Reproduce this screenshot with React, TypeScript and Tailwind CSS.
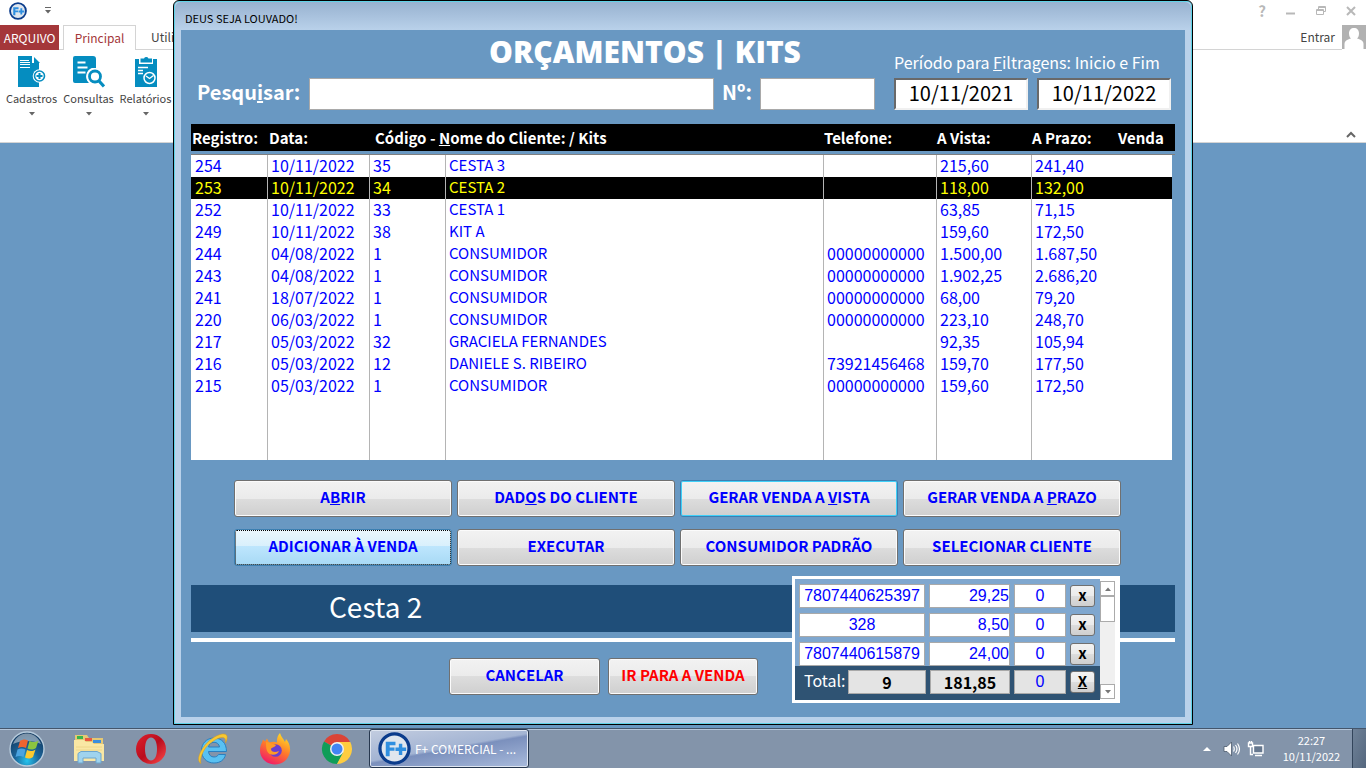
import * as React from "react"
import { clsx } from "clsx"

interface Budget {
  id: string
  date: string
  code: string
  name: string
  phone?: string
  cash: string
  credit: string
}

const budgets: Budget[] = [
  { id: "254", date: "10/11/2022", code: "35", name: "CESTA 3", cash: "215,60", credit: "241,40" },
  { id: "253", date: "10/11/2022", code: "34", name: "CESTA 2", cash: "118,00", credit: "132,00" },
  { id: "252", date: "10/11/2022", code: "33", name: "CESTA 1", cash: "63,85", credit: "71,15" },
  { id: "249", date: "10/11/2022", code: "38", name: "KIT A", cash: "159,60", credit: "172,50" },
  { id: "244", date: "04/08/2022", code: "1", name: "CONSUMIDOR", phone: "00000000000", cash: "1.500,00", credit: "1.687,50" },
  { id: "243", date: "04/08/2022", code: "1", name: "CONSUMIDOR", phone: "00000000000", cash: "1.902,25", credit: "2.686,20" },
  { id: "241", date: "18/07/2022", code: "1", name: "CONSUMIDOR", phone: "00000000000", cash: "68,00", credit: "79,20" },
  { id: "220", date: "06/03/2022", code: "1", name: "CONSUMIDOR", phone: "00000000000", cash: "223,10", credit: "248,70" },
  { id: "217", date: "05/03/2022", code: "32", name: "GRACIELA FERNANDES", cash: "92,35", credit: "105,94" },
  { id: "216", date: "05/03/2022", code: "12", name: "DANIELE S. RIBEIRO", phone: "73921456468", cash: "159,70", credit: "177,50" },
  { id: "215", date: "05/03/2022", code: "1", name: "CONSUMIDOR", phone: "00000000000", cash: "159,60", credit: "172,50" },
]

const items = [
  { code: "7807440625397", price: "29,25", qty: "0" },
  { code: "328", price: "8,50", qty: "0" },
  { code: "7807440615879", price: "24,00", qty: "0" },
]

const selectedId = "253"

function AppLogo({ className }: { className?: string }) {
  return (
    <svg viewBox="0 0 34 34" className={className} aria-hidden="true">
      <circle cx="17" cy="17" r="15" fill="#dfe6ee" stroke="#0b3c8c" strokeWidth="3.4" />
      <path d="M8 10h10v3.6h-6v2.4h5v3.4h-5V25H8z" fill="#2f8fe0" />
      <path d="M21.500 12h3.500v4h4v3.600h-4v4h-3.500v-4h-3.500V16h3.500z" fill="#2f8fe0" />
    </svg>
  )
}

function RegisterIcon() {
  return (
    <svg viewBox="2 0 32 32" className="size-8" aria-hidden="true">
      <path d="M4 0h14v7h7v24H4z" fill="#058dc0" />
      <path d="M20 1l6 6h-6z" fill="#058dc0" />
      <path d="M6 4.500h9M6 6.500h10M6 8.500h10M6 11.500h10" stroke="#fff" strokeWidth="1" />
      <circle cx="25.500" cy="20" r="6.800" fill="#fff" />
      <circle cx="25.500" cy="20" r="5" fill="#fff" stroke="#058dc0" strokeWidth="1.600" />
      <path d="M25.500 17v6M22.500 20h6" stroke="#058dc0" strokeWidth="2" />
    </svg>
  )
}

function SearchIcon() {
  return (
    <svg viewBox="0 0 32 32" className="size-8" aria-hidden="true">
      <path d="M2 0h18a3 3 0 0 1 3 3v9h-4a9 9 0 0 0-3 15H2a2 2 0 0 1-2-2V2a2 2 0 0 1 2-2z" fill="#058dc0" />
      <path d="M4.500 6.500h8M4.500 11.500h10M4.500 16.500h8" stroke="#fff" strokeWidth="2" />
      <circle cx="22" cy="20.500" r="8.500" fill="#fff" />
      <circle cx="22" cy="20.500" r="5.500" fill="#fff" stroke="#058dc0" strokeWidth="2.800" />
      <path d="M26 25l5 5.500" stroke="#058dc0" strokeWidth="3.200" />
    </svg>
  )
}

function ReportIcon() {
  return (
    <svg viewBox="0 0 32 32" className="size-8" aria-hidden="true">
      <path d="M5 3h4v5h14V3h4v28H5z" fill="#058dc0" />
      <path d="M10.500 2.500h3.500a2.500 2.500 0 0 1 4.500 0H22V6.500H10.500z" fill="#058dc0" />
      <path d="M8 11.500h10M8 14.500h5M8 17.500h5" stroke="#fff" strokeWidth="1.400" />
      <circle cx="19.500" cy="22" r="5.500" fill="none" stroke="#fff" strokeWidth="1.500" />
      <path d="M16 20l3.500 2.500 4-3" fill="none" stroke="#fff" strokeWidth="1.400" />
    </svg>
  )
}

function Caret({ className }: { className?: string }) {
  return (
    <svg viewBox="0 0 6 4" className={clsx("h-1 w-1.5", className)} aria-hidden="true">
      <path d="M0 0h6L3 3.500z" fill="currentColor" />
    </svg>
  )
}

const groups = [
  { label: "Cadastros", icon: <RegisterIcon /> },
  { label: "Consultas", icon: <SearchIcon /> },
  { label: "Relatórios", icon: <ReportIcon /> },
]

function Ribbon() {
  return (
    <header className="bg-white font-['Noto_Sans_CJK_SC',sans-serif] text-[12px] text-[#444]">
      <div className="flex h-[25px] items-center pb-1 pl-[9px]">
        <AppLogo className="size-[18px]" />
        <button aria-label="Personalizar" className="ml-[18px] flex flex-col items-center gap-0.5 text-[#666]">
          <span className="h-px w-1.5 bg-[#666]" />
          <Caret />
        </button>
        <div className="ml-auto flex items-center gap-5 pr-2.5 text-[#b8b8b8]">
          <button className="text-[15px] leading-4 font-bold">?</button>
          <button aria-label="Minimizar">
            <svg viewBox="0 0 10 10" className="size-2.5"><path d="M0 7.500h9" stroke="currentColor" strokeWidth="2" /></svg>
          </button>
          <button aria-label="Restaurar">
            <svg viewBox="0 0 10 10" className="size-2.5" fill="none" stroke="currentColor">
              <path d="M.5 3.500h7v5h-7zM.5 4.500h7M2.500 3V.500h7v5H8M2.500 1.500h7" />
            </svg>
          </button>
          <button aria-label="Fechar">
            <svg viewBox="0 0 10 10" className="size-2.5"><path d="M1 1l8 8M9 1l-8 8" stroke="currentColor" strokeWidth="2" /></svg>
          </button>
        </div>
      </div>
      <nav className="flex h-[25px] leading-4">
        <button className="w-[59px] bg-[#a4373a] text-white">ARQUIVO</button>
        <span className="w-1 border-b border-[#d4d4d4]" />
        <button className="w-[73px] border-x border-t border-[#d4d4d4] text-[#a4373a]">Principal</button>
        <div className="flex flex-1 items-center border-b border-[#d4d4d4] pl-[15px]">
          <button>Utilitários</button>
          <button className="mr-[7px] ml-auto">Entrar</button>
        </div>
        <svg viewBox="0 0 24 24" className="h-6 w-6" aria-hidden="true">
          <path d="M0 0h24v24H0z" fill="#b1b1b1" />
          <path d="M12 3c3 0 5 2 5 5.500 0 2.500-1 4.200-2 5 3 .8 6.500 2 6.500 5.500v5h-19v-5c0-3.500 3.500-4.700 6.500-5.500-1-.8-2-2.500-2-5C7 5 9 3 12 3z" fill="#fff" />
        </svg>
      </nav>
      <div className="flex h-[93px] border-b border-[#d4d4d4] pt-1.5 pl-[3px]">
        {groups.map((group) => (
          <button key={group.label} className="flex w-[57px] flex-col items-center text-[11px] leading-4 whitespace-nowrap">
            {group.icon}
            <span className="mt-0.5 mb-1.5">{group.label}</span>
            <Caret className="text-[#666]" />
          </button>
        ))}
        <button aria-label="Recolher" className="mr-2.5 mb-1 ml-auto self-end text-[#666]">
          <svg viewBox="0 0 10 7" className="h-[7px] w-2.5"><path d="M1 6l4-4 4 4" fill="none" stroke="currentColor" strokeWidth="2" /></svg>
        </button>
      </div>
    </header>
  )
}

interface ActionButtonProps {
  children: React.ReactNode
  variant?: "default" | "hot" | "focused"
  className?: string
}

function ActionButton({ children, variant = "default", className = "text-[#0000ff]" }: ActionButtonProps) {
  return (
    <button
      className={clsx(
        "flex h-[37px] items-center justify-center rounded-[3px] border pb-1 text-[15px] leading-5 font-bold whitespace-nowrap",
        variant === "default" &&
          "border-[#707070] bg-linear-[#f2f2f2,#ebebeb_50%,#dddddd_50%,#cfcfcf] inset-ring inset-ring-[#fbfbfb]",
        variant === "hot" &&
          "border-[#3c7fb1] bg-linear-[#f2f2f2,#ebebeb_50%,#dddddd_50%,#cfcfcf] inset-ring inset-ring-[#3fd0f8]",
        variant === "focused" &&
          "border-[#3c7fb1] bg-linear-[#eaf6fd,#d9f0fc_46%,#bee6fd_46%,#a7d9f5] outline-1 -outline-offset-2 outline-dotted outline-black",
        className
      )}
    >
      <span>{children}</span>
    </button>
  )
}

function Filters() {
  return (
    <div className="flex justify-between pr-1 pl-1.5">
      <div className="flex-1">
        <h1 className="h-12 pt-1.5 pl-[218px] text-center font-['Open_Sans',sans-serif] text-[30px] leading-8 font-extrabold whitespace-nowrap">
          ORÇAMENTOS | KITS
        </h1>
        <div className="flex h-8 items-center text-[20px] leading-7 font-bold">
          <label htmlFor="search" className="w-28 pb-1">Pesqu<u>i</u>sar:</label>
          <input id="search" className="h-8 w-0 flex-1 border border-[#a9a9a9] bg-white px-1 font-normal text-black" />
          <label htmlFor="number" className="w-[46px] pb-1 pl-2">Nº:</label>
          <input id="number" className="h-8 w-[115px] border border-[#a9a9a9] bg-white px-1 font-normal text-black" />
        </div>
      </div>
      <fieldset className="ml-[19px] w-[277px] pt-5">
        <legend className="float-left h-7 text-[16px] leading-6 whitespace-nowrap">
          Período para <u>F</u>iltragens: Inicio e Fim
        </legend>
        <div className="clear-both flex gap-[9px] text-[20px] text-black">
          <input
            aria-label="Inicio"
            defaultValue="10/11/2021"
            className="h-8 w-0 flex-1 border-2 border-t-[#696969] border-r-[#f0f0f0] border-b-[#f0f0f0] border-l-[#696969] bg-white pb-1 text-center"
          />
          <input
            aria-label="Fim"
            defaultValue="10/11/2022"
            className="h-8 w-0 flex-1 border-2 border-t-[#696969] border-r-[#f0f0f0] border-b-[#f0f0f0] border-l-[#696969] bg-white pb-1 text-center"
          />
        </div>
      </fieldset>
    </div>
  )
}

function BudgetTable() {
  return (
    <table className="mt-3.5 w-full table-fixed border-separate border-spacing-0 text-left">
      <colgroup>
        <col className="w-[77px]" />
        <col className="w-[102px]" />
        <col className="w-[76px]" />
        <col />
        <col className="w-[113px]" />
        <col className="w-[95px]" />
        <col className="w-[86px]" />
        <col className="w-[57px]" />
      </colgroup>
      <thead className="text-[15px] leading-[27px] whitespace-nowrap">
        <tr className="h-[27px] bg-black">
          <th className="pl-px">Registro:</th>
          <th className="pl-px">Data:</th>
          <th colSpan={2} className="pl-[5px]">Código - <u>N</u>ome do Cliente: / Kits</th>
          <th>Telefone:</th>
          <th>A Vista:</th>
          <th>A Prazo:</th>
          <th>Venda</th>
        </tr>
        <tr aria-hidden="true" className="h-1">
          <td colSpan={8} className="h-1 border-b border-[#7f7f7f] p-0" />
        </tr>
      </thead>
      <tbody className="bg-white text-[16px] leading-[22px] whitespace-nowrap text-[#0000ff]">
        {budgets.map((row) => (
          <tr key={row.id} className={clsx("h-[22px] align-top leading-5", row.id === selectedId && "bg-black text-[#ffff00]")}>
            <td className="border-r border-[#b4b4b4] pl-1">{row.id}</td>
            <td className="border-r border-[#b4b4b4] pl-[3px]">{row.date}</td>
            <td className="border-r border-[#b4b4b4] pl-[3px]">{row.code}</td>
            <td className="border-r border-[#b4b4b4] pl-[3px] text-[15px]">{row.name}</td>
            <td className="border-r border-[#b4b4b4] pl-[3px]">{row.phone}</td>
            <td className="border-r border-[#b4b4b4] pl-[3px]">{row.cash}</td>
            <td colSpan={2} className="border-r-3 border-[#6998c2] pl-[3px]">{row.credit}</td>
          </tr>
        ))}
        <tr aria-hidden="true" className="h-[63px]">
          <td className="border-r border-[#b4b4b4]" />
          <td className="border-r border-[#b4b4b4]" />
          <td className="border-r border-[#b4b4b4]" />
          <td className="border-r border-[#b4b4b4]" />
          <td className="border-r border-[#b4b4b4]" />
          <td className="border-r border-[#b4b4b4]" />
          <td colSpan={2} className="border-r-3 border-[#6998c2]" />
        </tr>
      </tbody>
    </table>
  )
}

function RemoveButton({ label, children }: { label: string; children: React.ReactNode }) {
  return (
    <button
      aria-label={label}
      className="h-[22px] w-[25px] rounded-[3px] border border-[#707070] bg-linear-[#f2f2f2,#ebebeb_50%,#dddddd_50%,#cfcfcf] pb-0.5 font-['Noto_Sans_CJK_SC',sans-serif] text-[15px] leading-4 font-bold text-black"
    >
      {children}
    </button>
  )
}

function ItemsPanel() {
  return (
    <section className="absolute -top-[9px] right-[55px] flex w-[328px] border-[3px] border-white bg-white font-['Liberation_Sans',sans-serif] text-[16px] text-[#0000ff]">
      <div className="flex-1">
        <div className="flex h-[87px] flex-col gap-[5px] overflow-hidden bg-[#7fa7cf] pt-[5px] pl-1">
          {items.map((item) => (
            <div key={item.code} className="flex h-6 shrink-0 items-center gap-1">
              <input aria-label="Código" defaultValue={item.code} className="h-6 w-[126px] border border-[#a9a9a9] bg-white text-center" />
              <input aria-label="Valor" defaultValue={item.price} className="h-6 w-[81px] border border-[#a9a9a9] bg-white text-right" />
              <input aria-label="Quantidade" defaultValue={item.qty} className="h-6 w-[52px] border border-[#a9a9a9] bg-white text-center" />
              <RemoveButton label="Remover item">x</RemoveButton>
            </div>
          ))}
        </div>
        <div className="flex h-[34px] items-center gap-1 bg-[#2f5373] pb-0.5 pl-[9px]">
          <label htmlFor="total" className="w-10 pb-1 font-['Noto_Sans_CJK_SC',sans-serif] text-[16px] leading-6 text-white">Total:</label>
          <input id="total" readOnly defaultValue="9" className="h-6 w-[78px] border border-[#a9a9a9] bg-[#e4e4e4] text-center font-['Noto_Sans_CJK_SC',sans-serif] text-[16px] font-bold text-black" />
          <input aria-label="Valor total" readOnly defaultValue="181,85" className="h-6 w-[80px] border border-[#a9a9a9] bg-[#e4e4e4] text-center font-['Noto_Sans_CJK_SC',sans-serif] text-[16px] font-bold text-black" />
          <input aria-label="Quantidade total" readOnly defaultValue="0" className="h-6 w-[52px] border border-[#a9a9a9] bg-[#e4e4e4] text-center" />
          <RemoveButton label="Remover todos"><u>X</u></RemoveButton>
        </div>
      </div>
      <div className="mt-0.5 mr-0.5 flex h-[118px] w-[15px] flex-col bg-[#f0f0f0] text-[#777]">
        <button aria-label="Subir" className="flex h-[15px] items-center justify-center border border-[#ababab] bg-white">
          <Caret className="rotate-180" />
        </button>
        <span className="h-[26px] border border-[#ababab] bg-white" />
        <button aria-label="Descer" className="mt-auto flex h-[15px] items-center justify-center border border-[#ababab] bg-white">
          <Caret />
        </button>
      </div>
    </section>
  )
}

function BudgetWindow() {
  return (
    <main className="absolute inset-x-[173px] top-0 rounded-t-md border border-black bg-[#b9d1ea] px-[7px] pb-[7px] font-['Noto_Sans_CJK_SC',sans-serif] text-white inset-ring inset-ring-[#5fd3e8]">
      <div className="-mx-1.5 mt-px flex h-7 items-center rounded-t-md bg-linear-to-b from-[#98b2d0] to-[#b9d1ea] pt-1 pl-2.5 text-[11px] text-black">
        DEUS SEJA LOUVADO!
      </div>
      <div className="bg-[#6998c2] px-[10px] pb-[22px]">
        <Filters />
        <BudgetTable />
        <div className="mt-5 mr-[54px] ml-[43px] grid grid-cols-4 gap-x-[5px] gap-y-3">
          <ActionButton>A<u>B</u>RIR</ActionButton>
          <ActionButton>DAD<u>O</u>S DO CLIENTE</ActionButton>
          <ActionButton variant="hot">GERAR VENDA A <u>V</u>ISTA</ActionButton>
          <ActionButton>GERAR VENDA A <u>P</u>RAZO</ActionButton>
          <ActionButton variant="focused">ADICIONAR À VENDA</ActionButton>
          <ActionButton>EXECUTAR</ActionButton>
          <ActionButton>CONSUMIDOR PADRÃO</ActionButton>
          <ActionButton>SELECIONAR CLIENTE</ActionButton>
        </div>
        <div className="relative mt-[19px]">
          <p className="h-[47px] bg-[#1f4e79] pl-[138px] text-[28px] leading-[42px]">Cesta 2</p>
          <hr className="mt-1.5 h-1 border-0 bg-white" />
          <ItemsPanel />
        </div>
        <div className="mt-4 ml-[258px] flex gap-2">
          <ActionButton className="w-[151px] text-[#0000ff]">CANCELAR</ActionButton>
          <ActionButton className="w-[150px] text-[#ff0000]">IR PARA A VENDA</ActionButton>
        </div>
      </div>
    </main>
  )
}

function StartIcon() {
  return (
    <svg viewBox="0 0 36 36" className="size-9" aria-hidden="true">
      <defs>
        <radialGradient id="orb" cx="50%" cy="85%" r="80%">
          <stop offset="0" stopColor="#25c4ee" />
          <stop offset=".45" stopColor="#1b6499" />
          <stop offset="1" stopColor="#123a61" />
        </radialGradient>
      </defs>
      <circle cx="18" cy="18" r="17" fill="url(#orb)" stroke="#b7cbdc" strokeWidth="1.400" />
      <path d="M4 13C7 5 13 2.500 18 2.500S29 5 32 13c-8-4-20-4-28 0z" fill="#fff" opacity=".45" />
      <path d="M11 10c3-2 5-2 8-.5L17 17c-3-1.500-5-1.500-8 0z" fill="#ee6430" />
      <path d="M20.500 10c3 1.500 6 1.500 9-.5L27 17c-3 2-5.500 2-8.500.5z" fill="#8cc540" />
      <path d="M8.500 18.500c3-1.500 5-1.500 8 0l-2 7.500c-3-1.500-5-1.500-8 0z" fill="#4aa3e0" />
      <path d="M18 19c3 1.500 5.500 1.500 8.500-.5L24 26c-3 2-5 2-8 .5z" fill="#fcc92f" />
    </svg>
  )
}

function ExplorerIcon() {
  return (
    <svg viewBox="0 0 32 32" className="size-8" aria-hidden="true">
      <path d="M2 2h12l2 3h14v22H2z" fill="#e5c874" />
      <path d="M4 3h6v3H4z" fill="#39b54a" />
      <path d="M12 5h7v3h-7z" fill="#e9573f" />
      <path d="M20 7h8v3h-8z" fill="#3b8ede" />
      <path d="M1 7h10l2 2h6l2 2h10v17H1z" fill="#f9e7a4" />
      <path d="M3 14h26M3 17h26" stroke="#edd68a" />
      <path d="M5 30V20.500l3-2h16l4 2V30h-5v-5H10v5z" fill="#9fd3ee" stroke="#6ca6cf" />
    </svg>
  )
}

function OperaIcon() {
  return (
    <svg viewBox="0 0 32 32" className="size-8" aria-hidden="true">
      <defs>
        <linearGradient id="opera" x1="0" x2="1" y1="0" y2="1">
          <stop offset="0" stopColor="#e0202c" />
          <stop offset=".5" stopColor="#b90d1e" />
          <stop offset="1" stopColor="#ff4b4b" />
        </linearGradient>
      </defs>
      <path fillRule="evenodd" d="M16 1a15 15 0 1 1 0 30 15 15 0 0 1 0-30zm0 3.500c-4 0-6 5-6 11.500s2 11.500 6 11.500 6-5 6-11.500-2-11.500-6-11.500z" fill="url(#opera)" />
    </svg>
  )
}

function ExplorerBrowserIcon() {
  return (
    <svg viewBox="0 0 32 32" className="size-8" aria-hidden="true">
      <path
        fillRule="evenodd"
        d="M17 5c7.500 0 12.500 5 12.500 13.500H11.500c.3 3.500 2.500 5.500 5.500 5.500 2.200 0 3.700-1 4.500-2.500h7C27.500 27 23 30 17 30 9.500 30 4.500 24.500 4.500 17.500S9.500 5 17 5zm-5.500 9h11c-.4-3-2.700-4.700-5.500-4.700s-5 1.700-5.500 4.700z"
        fill="#59c1f2"
        stroke="#2a80c0"
      />
      <path d="M4 30.500C-1.500 28 3 16 12 8 20 1 29-1 30 3c.5 2-.5 5-1.500 7 .5-4-.5-6-4-5.500C20 5 13 9.500 8.500 15 5 20 2.500 27 4 30.500z" fill="#f8c832" stroke="#d99a1a" strokeWidth=".5" />
    </svg>
  )
}

function FirefoxIcon() {
  return (
    <svg viewBox="0 0 32 32" className="size-8" aria-hidden="true">
      <defs>
        <linearGradient id="fox" x1=".8" x2=".3" y1="0" y2="1">
          <stop offset="0" stopColor="#ffe226" />
          <stop offset=".5" stopColor="#ff7a2a" />
          <stop offset="1" stopColor="#f0186a" />
        </linearGradient>
      </defs>
      <path d="M21 0c1 4 4 6 5 9l1-3c3 3 4.500 8 4 12-1 8-7 13.500-15 13.500S1 25.500 1 17.500c0-4 1-6 2-8l1-3 2 2 2-3 2 4c3-1 6-1 8 0-.5-4 1-7.500 3-9.500z" fill="url(#fox)" />
      <circle cx="16.500" cy="17.500" r="6.300" fill="#6a3fd0" />
      <path d="M7 9c4 0 6 2 10 3-1 2.500-4 2-5 4 0 3 4 4 8 2-1 4-9 6-12 0-1-3-1-6-1-9z" fill="#ff9a26" />
    </svg>
  )
}

function ChromeIcon() {
  return (
    <svg viewBox="0 0 32 32" className="size-8" aria-hidden="true">
      <path d="M16 16 3 8.500A15 15 0 0 1 29 8.500z" fill="#db4437" />
      <path d="M16 16 3 8.500A15 15 0 0 0 16 31l6.500-11.500z" fill="#0f9d58" />
      <path d="M16 9h13.300A15 15 0 0 1 16 31l6.100-11.500z" fill="#ffcd40" />
      <circle cx="16" cy="16" r="7" fill="#f1f1f1" />
      <circle cx="16" cy="16" r="5.500" fill="#4285f4" />
    </svg>
  )
}

const launchers = [
  { label: "Explorador", icon: <ExplorerIcon /> },
  { label: "Opera", icon: <OperaIcon /> },
  { label: "Internet Explorer", icon: <ExplorerBrowserIcon /> },
  { label: "Firefox", icon: <FirefoxIcon /> },
  { label: "Chrome", icon: <ChromeIcon /> },
]

function Taskbar() {
  return (
    <footer className="flex h-10 items-stretch border-t border-[#44566c] bg-[#8394aa] font-['Noto_Sans_CJK_SC',sans-serif] text-[12px] text-white inset-shadow-[0_1px_#b4c6da]">
      <button aria-label="Iniciar" className="flex w-[58px] items-center pl-[9px]">
        <StartIcon />
      </button>
      {launchers.map((launcher) => (
        <button key={launcher.label} aria-label={launcher.label} className="flex w-[62px] items-center justify-center">
          {launcher.icon}
        </button>
      ))}
      <button className="ml-px flex w-[160px] items-center gap-1 rounded-[3px] border border-[#27384f] bg-linear-[170deg,#c3cde0,#a3b4d3_48%,#7b90bd_52%,#a9bbdc] pl-2 whitespace-nowrap inset-ring inset-ring-[#dfe6f1]">
        <AppLogo className="size-[33px] shrink-0" />
        F+ COMERCIAL - ...
      </button>
      <div className="ml-auto flex items-center">
        <svg viewBox="0 0 8 5" className="h-[5px] w-2" aria-hidden="true"><path d="M0 5l4-4 4 4z" fill="#fff" /></svg>
        <svg viewBox="0 0 18 16" className="ml-3 h-4 w-[18px]" fill="none" stroke="#fff" aria-hidden="true">
          <path d="M1 5.500h3L8.500 1v14L4 10.500H1z" fill="#fff" stroke="#4c5a6c" strokeWidth=".8" />
          <path d="M10.500 5.500q1.500 2.500 0 5M12.500 4q3 4 0 8M14.500 2.500q4 5.500 0 11" strokeWidth="1.200" />
        </svg>
        <svg viewBox="0 0 18 16" className="ml-1.5 h-4 w-[18px]" fill="none" stroke="#fff" strokeWidth="1.400" aria-hidden="true">
          <path d="M6.500 4.500h9.500v7.500H6.500z" fill="#66788f" />
          <path d="M8 14.500h7M1.500 2h4v3.500h-4zM2.500 0v2M4.500 0v2M3.500 5.500v8H6" />
        </svg>
        <time className="ml-3.5 w-[65px] pb-0.5 text-center text-[11px] leading-4">
          22:27
          <br />
          10/11/2022
        </time>
        <button aria-label="Mostrar área de trabalho" className="ml-2 h-full w-3.5 border-l border-[#33455b] bg-linear-to-br from-[#6f8298] to-[#55677e]" />
      </div>
    </footer>
  )
}

export default function App() {
  return (
    <div className="relative flex min-h-screen flex-col bg-[#6998c2]">
      <Ribbon />
      <div className="flex-1" />
      <Taskbar />
      <BudgetWindow />
    </div>
  )
}
